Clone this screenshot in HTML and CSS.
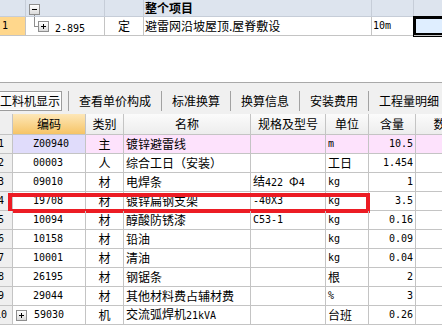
FILE: index.html
```html
<!DOCTYPE html>
<html lang="zh-CN">
<head>
    <meta charset="UTF-8">
    <meta name="viewport" content="width=device-width, initial-scale=1.0">
    <title>工料机显示</title>
    <link rel="stylesheet" href="styles.css">
</head>
<body>
    <div class="proj">
        <div class="prow phead">
            <div class="c"></div>
            <div class="c tree">
                <span class="tog"><svg width="9" height="9" viewBox="0 0 9 9"><path d="M2 4.5h5" stroke="#000" stroke-width="1"/></svg></span>
            </div>
            <div class="c"></div>
            <div class="c title">整个项目</div>
            <div class="c"></div>
            <div class="c"></div>
        </div>
        <div class="prow">
            <div class="c no"><span class="en">1</span></div>
            <div class="c tree">
                <span class="elbow"></span>
                <span class="tog"><svg width="9" height="9" viewBox="0 0 9 9"><path d="M2 4.5h5M4.5 2v5" stroke="#000" stroke-width="1"/></svg></span>
                <span class="en code">2-895</span>
            </div>
            <div class="c mid">定</div>
            <div class="c txt">避雷网沿坡屋顶.屋脊敷设</div>
            <div class="c txt"><span class="en">10m</span></div>
            <div class="c cur"></div>
        </div>
    </div>

    <div class="tabs">
        <div class="tab active">工料机显示</div>
        <div class="tab">查看单价构成</div>
        <div class="tab">标准换算</div>
        <div class="tab">换算信息</div>
        <div class="tab">安装费用</div>
        <div class="tab">工程量明细</div>
    </div>

    <div class="mgrid">
        <div class="mrow mhead">
            <div class="c"></div>
            <div class="c sel">编码</div>
            <div class="c">类别</div>
            <div class="c">名称</div>
            <div class="c">规格及型号</div>
            <div class="c">单位</div>
            <div class="c">含量</div>
            <div class="c">数量</div>
        </div>
        <div class="mrow main">
            <div class="c no"><span class="en">1</span></div>
            <div class="c code en hl">Z00940</div>
            <div class="c mid">主</div>
            <div class="c">镀锌避雷线</div>
            <div class="c"></div>
            <div class="c en">m</div>
            <div class="c num en">10.5</div>
            <div class="c"></div>
        </div>
        <div class="mrow">
            <div class="c no"><span class="en">2</span></div>
            <div class="c code en">00003</div>
            <div class="c mid">人</div>
            <div class="c">综合工日（安装）</div>
            <div class="c"></div>
            <div class="c">工日</div>
            <div class="c num en">1.454</div>
            <div class="c"></div>
        </div>
        <div class="mrow">
            <div class="c no"><span class="en">3</span></div>
            <div class="c code en">09010</div>
            <div class="c mid">材</div>
            <div class="c">电焊条</div>
            <div class="c"><span>结<span class="en">422&nbsp;</span>Φ<span class="en">4</span></span></div>
            <div class="c en">kg</div>
            <div class="c num en">1</div>
            <div class="c"></div>
        </div>
        <div class="mrow marked">
            <div class="c no"><span class="en">4</span></div>
            <div class="c code en">19708</div>
            <div class="c mid">材</div>
            <div class="c">镀锌扁钢支架</div>
            <div class="c en">-40X3</div>
            <div class="c en">kg</div>
            <div class="c num en">3.5</div>
            <div class="c"></div>
            <div class="redbox"></div>
        </div>
        <div class="mrow">
            <div class="c no"><span class="en">5</span></div>
            <div class="c code en">10094</div>
            <div class="c mid">材</div>
            <div class="c">醇酸防锈漆</div>
            <div class="c en">C53-1</div>
            <div class="c en">kg</div>
            <div class="c num en">0.16</div>
            <div class="c"></div>
        </div>
        <div class="mrow">
            <div class="c no"><span class="en">6</span></div>
            <div class="c code en">10158</div>
            <div class="c mid">材</div>
            <div class="c">铅油</div>
            <div class="c"></div>
            <div class="c en">kg</div>
            <div class="c num en">0.09</div>
            <div class="c"></div>
        </div>
        <div class="mrow">
            <div class="c no"><span class="en">7</span></div>
            <div class="c code en">10001</div>
            <div class="c mid">材</div>
            <div class="c">清油</div>
            <div class="c"></div>
            <div class="c en">kg</div>
            <div class="c num en">0.04</div>
            <div class="c"></div>
        </div>
        <div class="mrow">
            <div class="c no"><span class="en">8</span></div>
            <div class="c code en">26195</div>
            <div class="c mid">材</div>
            <div class="c">钢锯条</div>
            <div class="c"></div>
            <div class="c">根</div>
            <div class="c num en">2</div>
            <div class="c"></div>
        </div>
        <div class="mrow">
            <div class="c no"><span class="en">9</span></div>
            <div class="c code en">29044</div>
            <div class="c mid">材</div>
            <div class="c">其他材料费占辅材费</div>
            <div class="c"></div>
            <div class="c en">%</div>
            <div class="c num en">3</div>
            <div class="c"></div>
        </div>
        <div class="mrow">
            <div class="c no"><span class="en">10</span></div>
            <div class="c code sub">
                <span class="tog"><svg width="9" height="9" viewBox="0 0 9 9"><path d="M2 4.5h5M4.5 2v5" stroke="#000" stroke-width="1"/></svg></span>
                <span class="en">59030</span>
            </div>
            <div class="c mid">机</div>
            <div class="c"><span>交流弧焊机<span class="en">21kVA</span></span></div>
            <div class="c"></div>
            <div class="c">台班</div>
            <div class="c num en">0.26</div>
            <div class="c"></div>
        </div>
    </div>
</body>
</html>
```

FILE: styles.css
```css
:root {
    --line: #c4c4c4;
    --head: #dde4ee;
    --pink: #fde2fc;
    --lilac: #e0dcfb;
    --mark: #ec1c24;
    --tree: #8e8e8e;
}

body {
    margin: 0;
    width: 442px;
    height: 334px;
    overflow: hidden;
    font-family: "Noto Sans CJK SC", sans-serif;
    font-size: 12px;
    color: #000;
    background: #fff;
}

.en {
    font-family: "DejaVu Sans Mono", monospace;
    font-size: 10px;
}

.c {
    box-sizing: border-box;
    border-right: 1px solid var(--line);
    border-bottom: 1px solid var(--line);
    display: flex;
    align-items: center;
    overflow: hidden;
    white-space: nowrap;
    line-height: 16px;
}

/* top project grid */
.proj {
    height: 83px;
    box-sizing: border-box;
    background: #fff;
    border-bottom: 1px solid #a9a9a9;
}

.prow {
    display: grid;
    grid-template-columns: 26px 79px 39px 228px 42px 40px;
    height: 19px;
}

.phead {
    height: 17px;
    background: var(--head);
}

.phead .c {
    border-color: #c6cdd8;
}

.prow .no {
    background: #ffd78c;
    padding-left: 4px;
}

.prow .mid {
    justify-content: center;
}

.prow .txt {
    padding-left: 1px;
}

.title {
    font-weight: bold;
    padding-left: 1px;
}

.tree {
    align-items: flex-start;
}

.phead .tree {
    background: linear-gradient(var(--tree), var(--tree)) no-repeat 8px 13px / 1px 3px, var(--head);
}

.phead .tree .tog {
    margin: 2px 0 0 3px;
}

.tog {
    box-sizing: border-box;
    width: 11px;
    height: 11px;
    border: 1px solid var(--tree);
    background: linear-gradient(#ffffff, #dadada);
    display: flex;
    flex: none;
}

.elbow {
    box-sizing: border-box;
    width: 4px;
    height: 10px;
    margin-left: 8px;
    border-left: 1px solid var(--tree);
    border-bottom: 1px solid var(--tree);
    flex: none;
}

.prow .tree .tog {
    margin-top: 4px;
}

.prow .tree .code {
    margin: 4px 0 0 6px;
}

.cur {
    background: #dfeeff;
    box-shadow: inset 0 0 0 2px #000;
    outline: 1px solid #000;
}

/* tab strip */
.tabs {
    height: 31px;
    box-sizing: border-box;
    padding-top: 8px;
    background: #f0f0f0;
    display: flex;
    align-items: flex-start;
    white-space: nowrap;
    overflow: hidden;
}

.tab {
    height: 20px;
    line-height: 20px;
    padding: 0 10px;
    border-left: 1px solid #a2a2a2;
    flex: none;
}

.tab.active {
    box-sizing: border-box;
    margin: 0 6px 0 -3px;
    padding: 0 1px 0 2px;
    line-height: 18px;
    border: 1px solid #9c9c9c;
    background: #f9f9f9;
    box-shadow: inset 0 0 0 1px #fff;
}

/* material grid */
.mgrid {
    width: 442px;
    overflow: hidden;
}

.mrow {
    display: grid;
    grid-template-columns: 13px 73px 38px 127px 75px 43px 47px 60px;
    height: 19px;
    position: relative;
}

.mrow .c {
    padding-left: 2px;
}

.mhead {
    height: 21px;
    background: linear-gradient(#fbfbfb, #ececec);
}

.mhead .c {
    justify-content: center;
    padding-left: 0;
}

.mhead .sel {
    background: linear-gradient(#fde7b8, #f6c466);
}

.mrow .no {
    background: #efefef;
    padding-left: 0;
}

.no .en {
    display: block;
    flex: none;
    width: 24px;
    margin-left: -11px;
    text-align: center;
}

.mhead .c:first-child {
    background: #efefef;
}

.mrow .code {
    padding-left: 20px;
}

.mrow .sub {
    padding-left: 3px;
}

.sub .tog {
    margin-right: 7px;
}

.mrow .mid {
    justify-content: center;
    padding-left: 0;
}

.mrow .num {
    justify-content: flex-end;
    padding-right: 2px;
}

.main .c {
    background: var(--pink);
}

.main .hl {
    background: var(--lilac);
}

.main .no {
    background: #efefef;
}

.redbox {
    position: absolute;
    left: 8px;
    top: 1px;
    width: 362px;
    height: 20px;
    box-sizing: border-box;
    border: 4px solid var(--mark);
}
```
